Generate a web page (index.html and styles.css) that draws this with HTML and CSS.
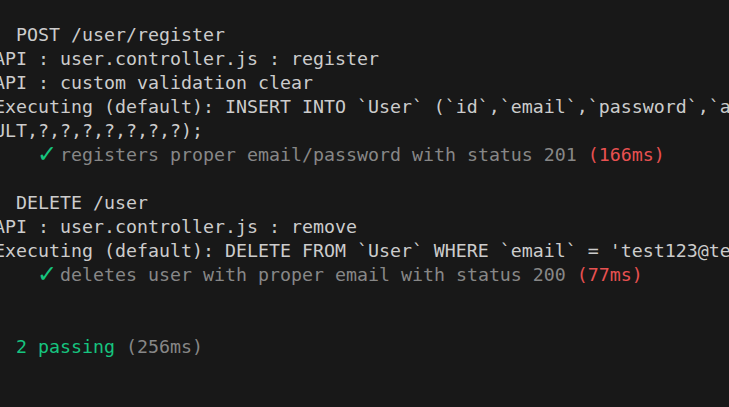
FILE: index.html
```html
<!DOCTYPE html>
<html>
<head>
<meta charset="utf-8">
<link rel="stylesheet" href="styles.css">
</head>
<body>
<div class="term">
<div class="line">  POST /user/register</div>
<div class="line">API : user.controller.js : register</div>
<div class="line">API : custom validation clear</div>
<div class="line">Executing (default): INSERT INTO `User` (`id`,`email`,`password`,`authority`,`createdAt`,`updatedAt`) VALUES (DEFA</div>
<div class="line">ULT,?,?,?,?,?,?,?);</div>
<div class="line">    <span class="ok check">✓</span> <span class="dim">registers proper email/password with status 201</span> <span class="slow">(166ms)</span></div>
<div class="line"> </div>
<div class="line">  DELETE /user</div>
<div class="line">API : user.controller.js : remove</div>
<div class="line">Executing (default): DELETE FROM `User` WHERE `email` = 'test123@test.com'</div>
<div class="line">    <span class="ok check">✓</span> <span class="dim">deletes user with proper email with status 200</span> <span class="slow">(77ms)</span></div>
<div class="line"> </div>
<div class="line"> </div>
<div class="line">  <span class="ok">2 passing</span> <span class="dim">(256ms)</span></div>
</div>
</body>
</html>
```
FILE: styles.css
```css
html, body {
  margin: 0;
  padding: 0;
  background: #181818;
  width: 729px;
  height: 407px;
  overflow: hidden;
}
.term {
  padding-top: 23px;
  margin-left: -6px;
  font-family: "DejaVu Sans Mono", "Liberation Mono", monospace;
  font-size: 18.27px;
  line-height: 24px;
  color: #cccccc;
}
.line {
  white-space: pre;
  height: 24px;
}
.ok { color: #16c47f; }
.check {
  display: inline-block;
  width: 11px;
  font-family: "DejaVu Sans", sans-serif;
  font-size: 24px;
  font-weight: bold;
  text-align: center;
  vertical-align: top;
  line-height: 22px;
  text-indent: -1px;
}
.dim { color: #878787; }
.slow { color: #e85151; }
```
